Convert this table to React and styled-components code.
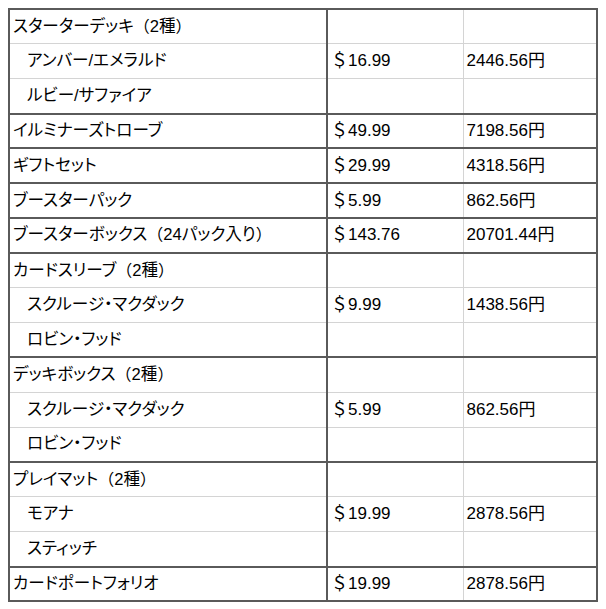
import React from 'react';
import styled, { createGlobalStyle } from 'styled-components';

const GlobalStyle = createGlobalStyle`
    body {
        margin: 0;
        padding: 8px 0 0 8px;
        background: #ffffff;
        font-family: "Liberation Sans", "Noto Sans CJK JP", sans-serif;
        color: #000000;
    }
`;

const Table = styled.table`
    border-collapse: collapse;
    table-layout: fixed;
    width: 590px;
    border: 2px solid #5a5a5a;
    font-size: 16px;
`;

const Group = styled.tbody`
    border-top: 2px solid #5a5a5a;
`;

const Row = styled.tr`
    height: 34.85px;
`;

const Cell = styled.td`
    padding: 0 0 0 ${({ indent }) => (indent ? '17px' : '3px')};
    border: 1px solid #d4d4d4;
    border-right: ${({ strong }) => (strong ? '2px solid #5a5a5a' : '1px solid #d4d4d4')};
    white-space: nowrap;
    vertical-align: middle;
    line-height: 20px;
`;

const NameCell = styled(Cell)`
    font-size: 16.6px;
    font-feature-settings: "palt";
`;

const Paren = styled.span`
    font-feature-settings: normal;
    font-size: 16px;
`;

const Price = styled(Cell)`
    padding-left: 3px;
    font-size: 17px;
`;

const groups = [
    [
        { name: 'スターターデッキ（2種）' },
        { name: 'アンバー/エメラルド', sub: true, usd: '＄16.99', jpy: '2446.56円' },
        { name: 'ルビー/サファイア', sub: true },
    ],
    [{ name: 'イルミナーズトローブ', usd: '＄49.99', jpy: '7198.56円' }],
    [{ name: 'ギフトセット', usd: '＄29.99', jpy: '4318.56円' }],
    [{ name: 'ブースターパック', usd: '＄5.99', jpy: '862.56円' }],
    [{ name: 'ブースターボックス（24パック入り）', usd: '＄143.76', jpy: '20701.44円' }],
    [
        { name: 'カードスリーブ（2種）' },
        { name: 'スクルージ・マクダック', sub: true, usd: '＄9.99', jpy: '1438.56円' },
        { name: 'ロビン・フッド', sub: true },
    ],
    [
        { name: 'デッキボックス（2種）' },
        { name: 'スクルージ・マクダック', sub: true, usd: '＄5.99', jpy: '862.56円' },
        { name: 'ロビン・フッド', sub: true },
    ],
    [
        { name: 'プレイマット（2種）' },
        { name: 'モアナ', sub: true, usd: '＄19.99', jpy: '2878.56円' },
        { name: 'スティッチ', sub: true },
    ],
    [{ name: 'カードポートフォリオ', usd: '＄19.99', jpy: '2878.56円' }],
];

// full-width parens keep their natural width, the kana are set proportionally
const renderName = (text) =>
    text.split(/([（）])/).map((part, i) =>
        part === '（' || part === '）' ? <Paren key={i}>{part}</Paren> : part
    );

const App = () => {
    return (
        <>
            <GlobalStyle />
            <Table>
                <colgroup>
                    <col style={{ width: '318px' }} />
                    <col style={{ width: '136px' }} />
                    <col />
                </colgroup>
                {groups.map((group, gi) => (
                    <Group key={gi}>
                        {group.map((item, ri) => (
                            <Row key={ri}>
                                <NameCell indent={item.sub} strong>
                                    {renderName(item.name)}
                                </NameCell>
                                <Price>{item.usd}</Price>
                                <Price strong>{item.jpy}</Price>
                            </Row>
                        ))}
                    </Group>
                ))}
            </Table>
        </>
    );
};

export default App;
